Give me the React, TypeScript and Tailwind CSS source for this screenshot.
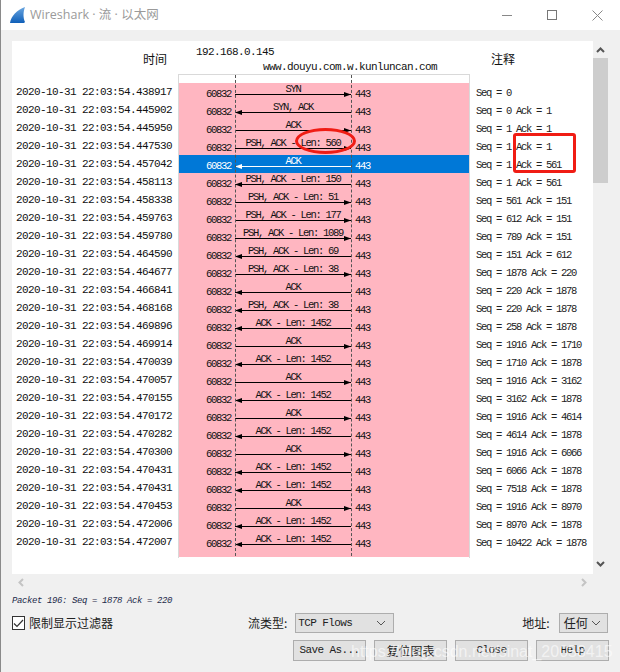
import React from "react";

type Flow = { time: string; label: string; dir: "r" | "l"; note: string };

const flows: Flow[] = [
  { time: "438917", label: "SYN", dir: "r", note: "Seq = 0" },
  { time: "445902", label: "SYN, ACK", dir: "l", note: "Seq = 0 Ack = 1" },
  { time: "445950", label: "ACK", dir: "r", note: "Seq = 1 Ack = 1" },
  { time: "447530", label: "PSH, ACK - Len: 560", dir: "r", note: "Seq = 1 Ack = 1" },
  { time: "457042", label: "ACK", dir: "l", note: "Seq = 1 Ack = 561" },
  { time: "458113", label: "PSH, ACK - Len: 150", dir: "l", note: "Seq = 1 Ack = 561" },
  { time: "458338", label: "PSH, ACK - Len: 51", dir: "r", note: "Seq = 561 Ack = 151" },
  { time: "459763", label: "PSH, ACK - Len: 177", dir: "r", note: "Seq = 612 Ack = 151" },
  { time: "459780", label: "PSH, ACK - Len: 1089", dir: "r", note: "Seq = 789 Ack = 151" },
  { time: "464590", label: "PSH, ACK - Len: 69", dir: "l", note: "Seq = 151 Ack = 612" },
  { time: "464677", label: "PSH, ACK - Len: 38", dir: "r", note: "Seq = 1878 Ack = 220" },
  { time: "466841", label: "ACK", dir: "l", note: "Seq = 220 Ack = 1878" },
  { time: "468168", label: "PSH, ACK - Len: 38", dir: "l", note: "Seq = 220 Ack = 1878" },
  { time: "469896", label: "ACK - Len: 1452", dir: "l", note: "Seq = 258 Ack = 1878" },
  { time: "469914", label: "ACK", dir: "r", note: "Seq = 1916 Ack = 1710" },
  { time: "470039", label: "ACK - Len: 1452", dir: "l", note: "Seq = 1710 Ack = 1878" },
  { time: "470057", label: "ACK", dir: "r", note: "Seq = 1916 Ack = 3162" },
  { time: "470155", label: "ACK - Len: 1452", dir: "l", note: "Seq = 3162 Ack = 1878" },
  { time: "470172", label: "ACK", dir: "r", note: "Seq = 1916 Ack = 4614" },
  { time: "470282", label: "ACK - Len: 1452", dir: "l", note: "Seq = 4614 Ack = 1878" },
  { time: "470300", label: "ACK", dir: "r", note: "Seq = 1916 Ack = 6066" },
  { time: "470431", label: "ACK - Len: 1452", dir: "l", note: "Seq = 6066 Ack = 1878" },
  { time: "470431", label: "ACK - Len: 1452", dir: "l", note: "Seq = 7518 Ack = 1878" },
  { time: "470453", label: "ACK", dir: "r", note: "Seq = 1916 Ack = 8970" },
  { time: "472006", label: "ACK - Len: 1452", dir: "l", note: "Seq = 8970 Ack = 1878" },
  { time: "472007", label: "ACK - Len: 1452", dir: "l", note: "Seq = 10422 Ack = 1878" },
];

const mono = "font-['Liberation_Mono',monospace] text-[11px] tracking-[-0.6px]";
// petit texte du graphe : 5px par caractère
const small = "font-['Liberation_Mono',monospace] text-[10.5px] tracking-[-1.3px]";
const cjk = "font-['Noto_Sans_CJK_SC',sans-serif]";

function FlowRow({ f, selected }: { f: Flow; selected: boolean }) {
  const ink = selected ? "text-white" : "text-[#111]";
  const head = selected ? "#ffffff" : "#000000";
  return (
    <div className={`flex h-[18px] ${selected ? "bg-[#0078d7]" : ""}`}>
      <div className={`w-[52px] pt-[5px] text-right leading-[12px] ${small} ${ink}`}>60832</div>
      <div className="relative ml-[4px] w-[116px]">
        <div className={`text-center leading-[12px] whitespace-nowrap ${small} ${ink}`}>{f.label}</div>
        <svg width="116" height="7" className="absolute top-[8px] left-0">
          <line x1="0" x2="116" y1="3.5" y2="3.5" stroke={head} strokeWidth="1" />
          {f.dir === "r" ? (
            <polygon points="116,3.5 109,1 109,6" fill={head} />
          ) : (
            <polygon points="0,3.5 7,1 7,6" fill={head} />
          )}
        </svg>
      </div>
      <div className={`ml-[4px] pt-[5px] leading-[12px] ${small} ${ink}`}>443</div>
    </div>
  );
}

function Btn({ children, className = "" }: { children: React.ReactNode; className?: string }) {
  return (
    <button
      type="button"
      className={`flex h-[21px] w-[73px] items-center justify-center border border-[#adadad] bg-[#e1e1e1] text-[#222] ${className}`}
    >
      {children}
    </button>
  );
}

function Caret() {
  return (
    <svg width="10" height="6" viewBox="0 0 10 6" fill="none" stroke="#555" strokeWidth="1">
      <path d="M1 1l4 4 4-4" />
    </svg>
  );
}

export default function App() {
  return (
    <div className="relative flex h-[672px] w-[620px] flex-col overflow-hidden border-l border-[#8a8a8a] bg-[#f0f0f0]">
      {/* barre de titre */}
      <div className="flex h-[30px] items-center bg-white">
        <svg width="18" height="18" viewBox="0 0 18 18" className="ml-[8px]">
          <defs>
            <linearGradient id="fin" x1="0" y1="0" x2="0" y2="1">
              <stop offset="0" stopColor="#6aa6e0" />
              <stop offset="1" stopColor="#0f5fb8" />
            </linearGradient>
          </defs>
          <path d="M1 17C2 10 8 4 16 1c-2 5-2 11 0 15l-1 1z" fill="url(#fin)" />
        </svg>
        <span className="ml-[3px] font-['Open_Sans','Noto_Sans_CJK_SC',sans-serif] text-[12.5px] text-[#9a9a9a]">
          Wireshark · 流 · 以太网
        </span>
        <div className="ml-auto flex items-center">
          <div className="h-px w-[10px] bg-[#888]" />
          <div className="ml-[35px] h-[10px] w-[10px] border border-[#777]" />
          <svg width="11" height="11" viewBox="0 0 11 11" stroke="#888" className="mr-[17px] ml-[35px]">
            <path d="M0.5 0.5l10 10M10.5 0.5l-10 10" />
          </svg>
        </div>
      </div>

      <div className="mt-[11px] ml-[11px] flex">
        {/* zone du graphe */}
        <div className="flex h-[533px] w-[581px] bg-white">
          <div className="w-[166px] shrink-0">
            <div className={`h-[33px] pt-[9px] pr-[11px] text-right text-[12px] leading-[18px] text-[#111] ${cjk}`}>时间</div>
            <div className="pt-[9px]">
              {flows.map((f, i) => (
                <div key={i} className={`h-[18px] pl-[4px] leading-[18px] whitespace-nowrap text-[#111] ${mono}`}>
                  2020-10-31 22:03:54.{f.time}
                </div>
              ))}
            </div>
          </div>

          <div className="w-[292px] shrink-0">
            <div className={`h-[33px] whitespace-nowrap text-[#111] ${mono}`}>
              <div className="pt-[5px] pl-[18px] leading-[12px]">192.168.0.145</div>
              <div className="pt-[3px] pl-[85px] leading-[12px]">www.douyu.com.w.kunluncan.com</div>
            </div>
            <div className="relative h-[484px] border-x border-t border-[#d9d9d9]">
              <div className="h-[8px] bg-white" />
              <div className="h-[474px] bg-[#ffb6c1]">
                {flows.map((f, i) => (
                  <FlowRow key={i} f={f} selected={i === 4} />
                ))}
              </div>
              <div className="absolute top-0 left-[56px] h-[481px] border-l border-dashed border-[#555]" />
              <div className="absolute top-0 left-[172px] h-[481px] border-l border-dashed border-[#555]" />
            </div>
          </div>

          <div className="min-w-0 flex-1">
            <div className={`h-[33px] pt-[9px] pl-[21px] text-[12px] leading-[18px] text-[#111] ${cjk}`}>注释</div>
            <div className="pt-[10px]">
              {flows.map((f, i) => (
                <div key={i} className={`h-[18px] pl-[6px] leading-[18px] whitespace-nowrap text-[#222] ${small}`}>
                  {f.note}
                </div>
              ))}
            </div>
          </div>
        </div>

        {/* ascenseur vertical */}
        <div className="flex h-[533px] w-[15px] flex-col items-center">
          <svg width="9" height="6" viewBox="0 0 9 6" className="mt-[6px]" fill="none" stroke="#555" strokeWidth="2">
            <path d="M1 5l3.5-3.5L8 5" />
          </svg>
          <div className="mt-[5px] h-[125px] w-[15px] bg-[#cdcdcd]" />
          <svg width="9" height="6" viewBox="0 0 9 6" className="mt-auto mb-[7px]" fill="none" stroke="#555" strokeWidth="2">
            <path d="M1 1l3.5 3.5L8 1" />
          </svg>
        </div>
      </div>

      {/* ascenseur horizontal */}
      <div className="ml-[11px] flex h-[16px] w-[581px] items-center justify-between px-[6px]">
        <svg width="6" height="9" viewBox="0 0 6 9" fill="none" stroke="#c4c4c4" strokeWidth="2">
          <path d="M5 1L1.5 4.5 5 8" />
        </svg>
        <svg width="6" height="9" viewBox="0 0 6 9" fill="none" stroke="#c4c4c4" strokeWidth="2">
          <path d="M1 1l3.5 3.5L1 8" />
        </svg>
      </div>

      <div className="mt-[5px] ml-[11px] font-['Liberation_Mono',monospace] text-[9px] leading-[12px] tracking-[-0.4px] text-[#1c2a4a] italic">
        Packet 196: Seq = 1878 Ack = 220
      </div>

      <div className={`mt-[6px] ml-[11px] flex h-[20px] items-center text-[12px] text-[#222] ${cjk}`}>
        <div className="flex h-[14px] w-[13px] items-center justify-center border border-[#333] bg-white">
          <svg width="11" height="9" viewBox="0 0 11 9" fill="none" stroke="#333" strokeWidth="1.2">
            <path d="M1 4.5l3 3 6-6.5" />
          </svg>
        </div>
        <span className="ml-[4px]">限制显示过滤器</span>
        <span className="ml-[135px]">流类型:</span>
        <div className={`ml-[8px] flex h-[20px] w-[99px] items-center justify-between border border-[#adadad] bg-[#e1e1e1] pr-[7px] pl-[2px] ${mono}`}>
          TCP Flows
          <Caret />
        </div>
        <span className="ml-[128px]">地址:</span>
        <div className="ml-[9px] flex h-[20px] w-[49px] items-center justify-between border border-[#adadad] bg-[#e1e1e1] pr-[6px] pl-[4px]">
          任何
          <Caret />
        </div>
      </div>

      <div className={`mt-[7px] mr-[11px] flex justify-end gap-[8px] ${mono}`}>
        <Btn>Save As...</Btn>
        <Btn className={`text-[12px] tracking-normal ${cjk}`}>复位图表</Btn>
        <Btn>Close</Btn>
        <Btn>Help</Btn>
      </div>

      {/* annotations par-dessus la capture */}
      <div className="absolute top-[128px] left-[294px] h-[26px] w-[61px] rounded-[50%] border-[3px] border-[#f01c14]" />
      <div className="absolute top-[133px] left-[512px] h-[40px] w-[63px] rounded-[3px] border-[3px] border-[#f01c14]" />
      <div className="absolute top-[642px] left-[350px] font-['Liberation_Sans',sans-serif] text-[16px] leading-[20px] whitespace-nowrap text-white/60">
        https://blog.csdn.net/sinat_20058415
      </div>
    </div>
  );
}
